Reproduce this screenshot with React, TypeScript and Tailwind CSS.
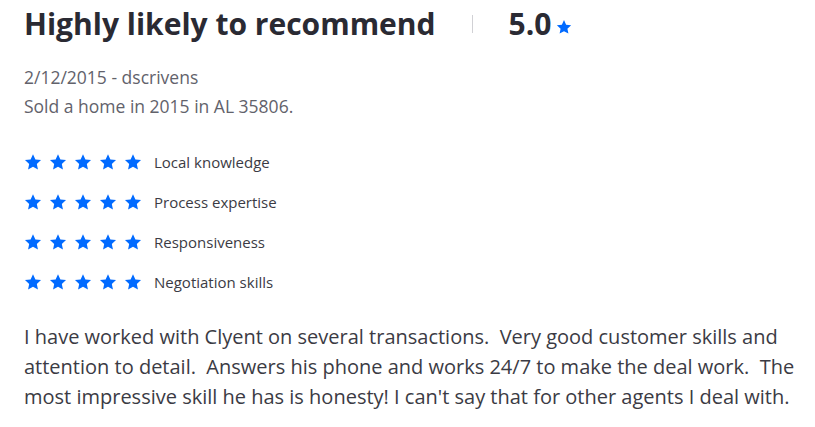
import React from "react";

const Star = ({ className }: { className: string }) => (
  <svg viewBox="0 0 24 24" className={className} fill="#006aff">
    <path d="M12 1.6l3.2 6.9 7.5.9-5.6 5.1 1.5 7.4L12 18.2l-6.6 3.7 1.5-7.4L1.3 9.4l7.5-.9z" />
  </svg>
);

const cats = ["Local knowledge", "Process expertise", "Responsiveness", "Negotiation skills"];

export default function App() {
  return (
    <div className="w-[815px] h-[427px] bg-white pl-6 pt-[4px] font-['Open_Sans',sans-serif]">
      <div className="flex items-center h-[40px]">
        <h2 className="text-[30px] font-bold text-[#2a2a33] leading-[40px]">Highly likely to recommend</h2>
        <div className="w-px h-[18px] bg-[#d1d1d5] mx-9"></div>
        <span className="text-[30px] font-bold text-[#2a2a33] leading-[40px]">5.0</span>
        <Star className="w-4 h-4 ml-[5px] mt-[6px]" />
      </div>
      <div className="mt-[19px] text-[17.5px] leading-[29px] text-[#62626b]">
        <div>2/12/2015 - dscrivens</div>
        <div>Sold a home in 2015 in AL 35806.</div>
      </div>
      <div className="mt-[21px] flex flex-col">
        {cats.map((c) => (
          <div key={c} className="flex items-center h-[40px]">
            <div className="flex gap-[7px]">
              {[0, 1, 2, 3, 4].map((i) => (
                <Star key={i} className="w-[18px] h-[18px]" />
              ))}
            </div>
            <span className="ml-[12px] text-[15px] text-[#3b3b44]">{c}</span>
          </div>
        ))}
      </div>
      <p className="mt-[20px] w-[785px] text-[20px] leading-[30px] text-[#3b3b44] whitespace-pre-wrap">
        {"I have worked with Clyent on several transactions.  Very good customer skills and attention to detail.  Answers his phone and works 24/7 to make the deal work.  The most impressive skill he has is honesty! I can't say that for other agents I deal with."}
      </p>
    </div>
  );
}
